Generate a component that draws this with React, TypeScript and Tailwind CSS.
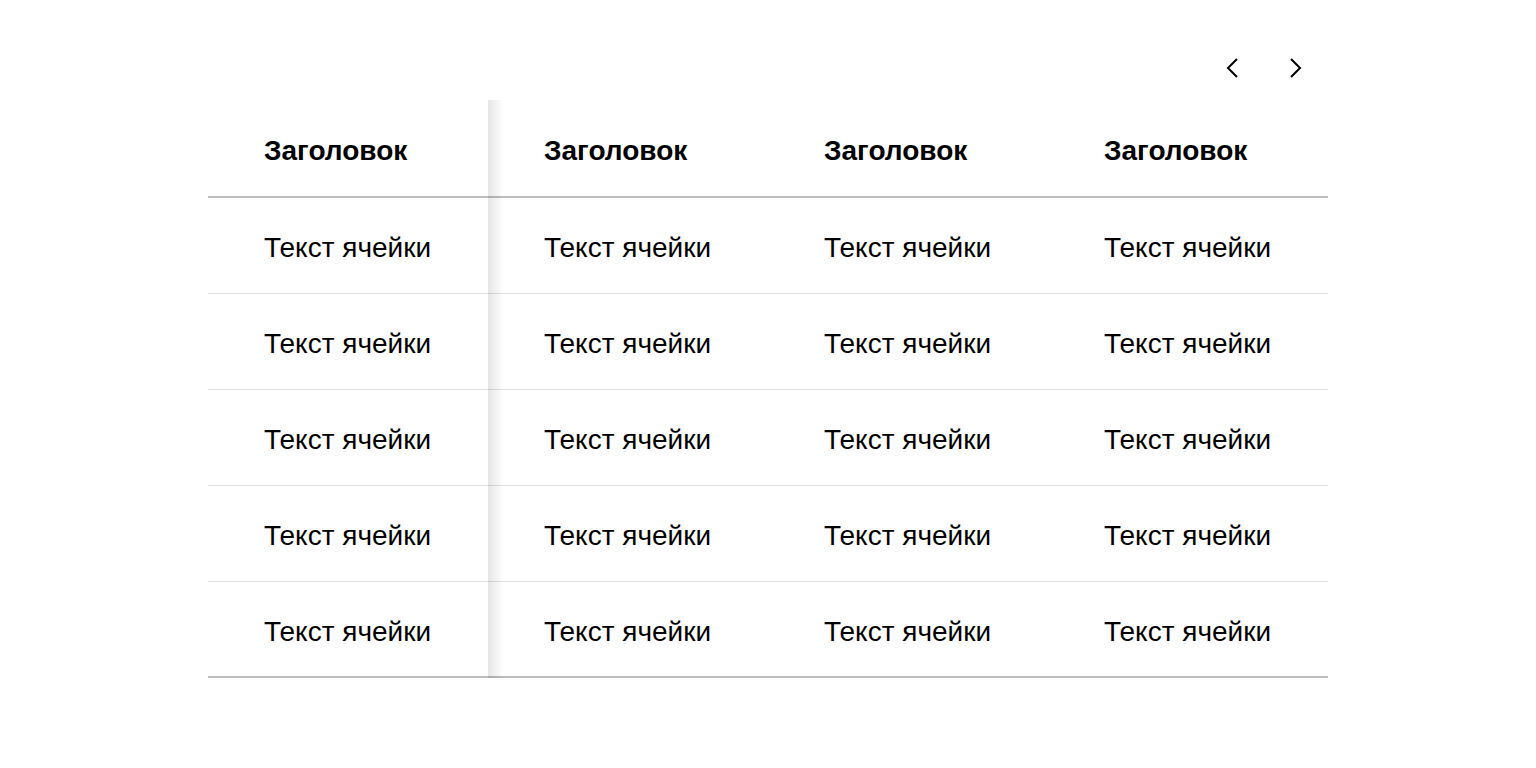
const headers = ["Заголовок", "Заголовок", "Заголовок", "Заголовок"];
const rows = Array.from({ length: 5 }, () => [
  "Текст ячейки",
  "Текст ячейки",
  "Текст ячейки",
  "Текст ячейки",
]);

function Chevron({ dir }: { dir: "left" | "right" }) {
  return (
    <svg width="12" height="20" viewBox="0 0 12 20" fill="none" aria-hidden>
      <path
        d={dir === "left" ? "M11 1 L2 10 L11 19" : "M1 1 L10 10 L1 19"}
        stroke="#000"
        strokeWidth="2"
      />
    </svg>
  );
}

export default function App() {
  return (
    <div className="min-h-screen bg-white font-['Liberation_Sans',Arial,sans-serif] text-black">
      <div className="mx-auto w-[1120px] pt-[44px]">
        <div className="flex justify-end gap-4 pr-2 mb-2">
          <button className="w-12 h-12 flex items-center justify-center">
            <Chevron dir="left" />
          </button>
          <button className="w-12 h-12 flex items-center justify-center">
            <Chevron dir="right" />
          </button>
        </div>

        <div className="relative border-b-2 border-[#bdbdbd]">
          <div className="grid grid-cols-4 h-[98px] pt-[6px] border-b-2 border-[#bdbdbd]">
            {headers.map((h, i) => (
              <div key={i} className="flex items-center pl-14 text-[28px] font-bold">
                {h}
              </div>
            ))}
          </div>
          {rows.map((r, ri) => {
            const last = ri === rows.length - 1;
            return (
              <div
                key={ri}
                className={
                  "grid grid-cols-4 " +
                  (last ? "h-[94px] pt-[6px]" : "h-24 pt-[5px] border-b border-[#e0e0e0]")
                }
              >
                {r.map((c, ci) => (
                  <div key={ci} className="flex items-center pl-14 text-[28px]">
                    {c}
                  </div>
                ))}
              </div>
            );
          })}
          {/* тень закреплённой колонки */}
          <div className="pointer-events-none absolute top-0 -bottom-0.5 left-[280px] w-4 bg-gradient-to-r from-black/10 to-transparent" />
        </div>
      </div>
    </div>
  );
}
